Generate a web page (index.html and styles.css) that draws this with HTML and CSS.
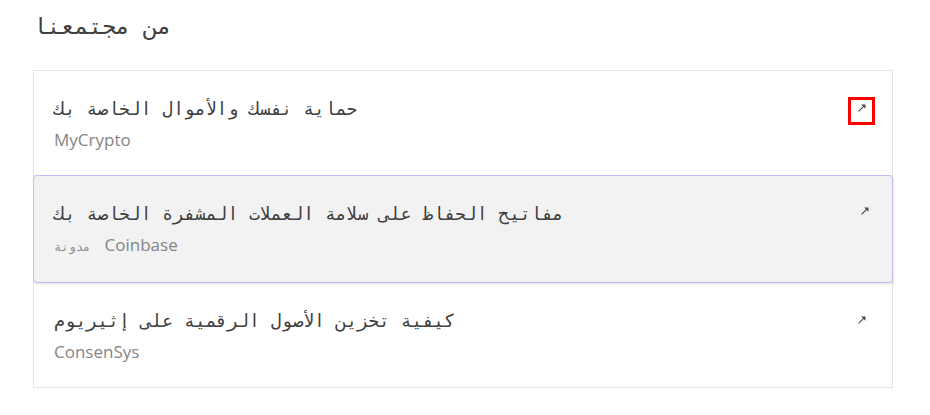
FILE: index.html
```html
<!DOCTYPE html>
<html lang="ar">
<head>
<meta charset="utf-8">
<link rel="stylesheet" href="styles.css">
</head>
<body>
<section class="community">
  <h2 class="heading">من مجتمعنا</h2>
  <div class="list">
    <a class="card" href="#">
      <div class="card-text">
        <div class="card-title">حماية نفسك والأموال الخاصة بك</div>
        <div class="card-sub">MyCrypto</div>
      </div>
      <span class="arrow focused"><svg viewBox="0 0 8 8" width="8" height="8"><path d="M0.6 7.4 L5.6 2.4" stroke="#444" stroke-width="1.1" fill="none"/><path d="M3.2 0.6 L7.5 0.5 L7.4 4.8 Z" fill="#444"/></svg></span>
    </a>
    <a class="card hover" href="#">
      <div class="card-text">
        <div class="card-title">مفاتيح الحفاظ على سلامة العملات المشفرة الخاصة بك</div>
        <div class="card-sub"><span class="ar">مدونة</span> Coinbase</div>
      </div>
      <span class="arrow shifted"><svg viewBox="0 0 8 8" width="8" height="8"><path d="M0.6 7.4 L5.6 2.4" stroke="#444" stroke-width="1.1" fill="none"/><path d="M3.2 0.6 L7.5 0.5 L7.4 4.8 Z" fill="#444"/></svg></span>
    </a>
    <a class="card" href="#">
      <div class="card-text">
        <div class="card-title">كيفية تخزين الأصول الرقمية على إثيريوم</div>
        <div class="card-sub">ConsenSys</div>
      </div>
      <span class="arrow"><svg viewBox="0 0 8 8" width="8" height="8"><path d="M0.6 7.4 L5.6 2.4" stroke="#444" stroke-width="1.1" fill="none"/><path d="M3.2 0.6 L7.5 0.5 L7.4 4.8 Z" fill="#444"/></svg></span>
    </a>
  </div>
</section>
</body>
</html>
```

FILE: styles.css
```css
html, body {
  margin: 0;
  padding: 0;
  background: #ffffff;
}

body {
  font-family: "Open Sans", sans-serif;
  color: #333333;
}

.community {
  padding: 0 37px 0 33px;
}

.heading {
  margin: 0;
  padding: 11px 0 0 0;
  height: 70px;
  box-sizing: border-box;
  font-family: "DejaVu Sans Mono", monospace;
  font-weight: normal;
  font-size: 23px;
  line-height: 30px;
  color: #404040;
}

.list {
  border: 1px solid #e5e5e5;
  display: flex;
  flex-direction: column;
}

.card {
  display: flex;
  justify-content: space-between;
  align-items: flex-start;
  padding: 23px 20px 23px 20px;
  text-decoration: none;
  color: #333333;
  border-bottom: 1px solid #e5e5e5;
  border-radius: 0;
}

.card:last-child {
  border-bottom: none;
}

.card.hover {
  background: #f2f2f2;
  border: 1px solid #bcbcf7;
  border-radius: 4px;
  margin: -1px -1px 0 -1px;
  padding: 23px 20px 23px 20px;
  box-shadow: 1px 2px 2px rgba(0, 0, 0, 0.08);
}

.card-title {
  font-family: "DejaVu Sans Mono", monospace;
  font-size: 18px;
  line-height: 29px;
  color: #404040;
}

.card-sub {
  margin-top: 5px;
  font-size: 17px;
  line-height: 24px;
  color: #858585;
}

.card-sub .ar {
  font-family: "DejaVu Sans Mono", monospace;
  font-size: 12px;
  color: #8a8a8a;
  margin-right: 10px;
}

.arrow {
  display: flex;
  justify-content: center;
  align-items: flex-start;
  width: 21px;
  height: 22px;
  padding-top: 4px;
  margin-top: 6px;
  box-sizing: border-box;
}

.arrow.focused {
  outline: 3px solid #ff0000;
  outline-offset: 0;
}

.arrow.shifted {
  transform: translate(3px, -2px);
}
```
